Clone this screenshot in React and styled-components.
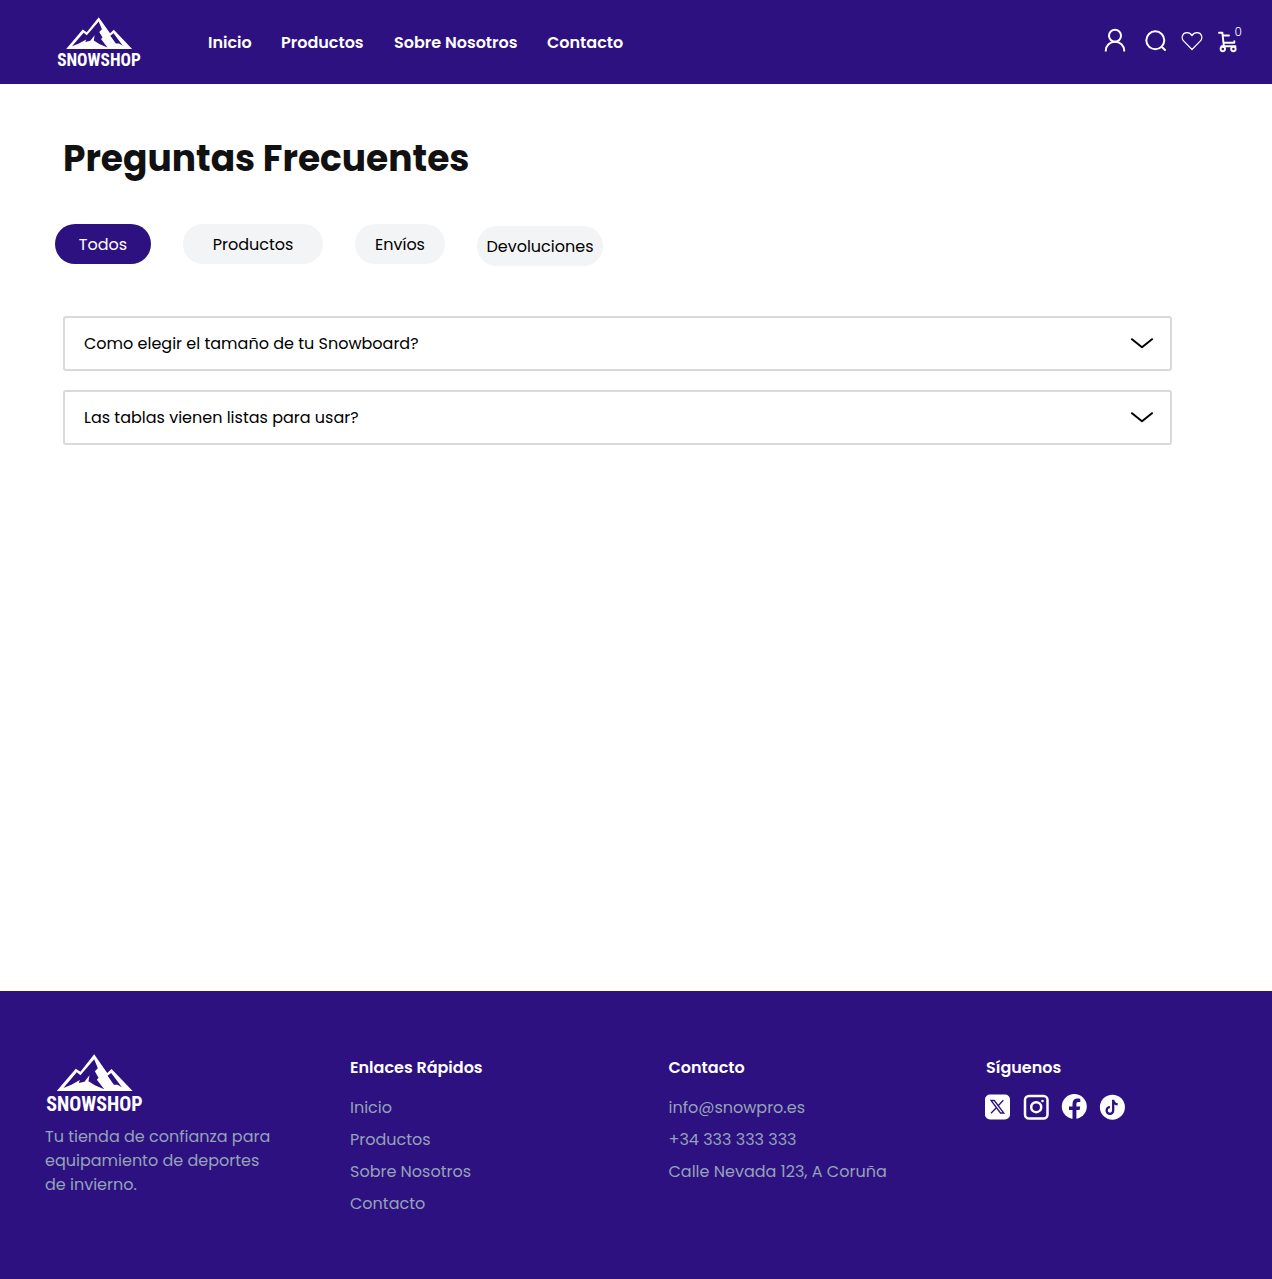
import React, { useState } from "react";
import styled, { createGlobalStyle } from "styled-components";

const GlobalStyle = createGlobalStyle`
  *, *::before, *::after { box-sizing: border-box; }
  body {
    margin: 0;
    background: #fff;
    color: #000;
    font-family: Poppins, Inter, "Open Sans", sans-serif;
    font-size: 16px;
    line-height: 24px;
  }
  h1, h2, p, ul { margin: 0; padding: 0; }
  ul { list-style: none; }
  svg { display: block; flex: none; }
`;

const Page = styled.div`
  min-height: 1279px;
  display: flex;
  flex-direction: column;
`;

const Header = styled.header`
  height: 84px;
  padding-left: 56px;
  display: flex;
  align-items: center;
  background: #2d1180;
  color: #fff;
`;

const Nav = styled.nav`
  display: grid;
  grid-template-columns: 73px 113px 153px auto;
  margin-left: 66px;
  padding-top: 1px;
`;

const NavLink = styled.a`
  font-weight: 600;
  white-space: nowrap;
`;

const Actions = styled.div`
  display: flex;
  align-items: center;
  gap: 12px;
  margin-left: auto;
  padding: 0 29px 2px 0;
`;

const IconButton = styled.button`
  display: flex;
  padding: 0;
  border: 0;
  background: none;
  color: inherit;
  font: inherit;
  margin-right: ${(p) => p.$after || 0}px;
`;

const CartButton = styled(IconButton)`
  position: relative;
`;

const CartCount = styled.span`
  position: absolute;
  top: -2px;
  right: 1px;
  font-size: 12px;
  font-weight: 300;
  line-height: 14px;
`;

const Main = styled.main`
  flex: 1;
  padding: 48px 100px 0 63px;
`;

const Title = styled.h1`
  color: #111;
  font-size: 36px;
  font-weight: 700;
  line-height: 54px;
`;

const Filters = styled.div`
  display: flex;
  align-items: flex-start;
  gap: 32px;
  margin: 38px 0 50px -8px;
`;

const Pill = styled.button`
  width: ${(p) => p.$width}px;
  height: 40px;
  padding: 1px 0 0;
  border: 0;
  border-radius: 20px;
  margin-top: ${(p) => (p.$lowered ? 2 : 0)}px;
  background: ${(p) => (p.$active ? "#2d1180" : "#f3f4f6")};
  color: ${(p) => (p.$active ? "#fff" : "#000")};
  font: inherit;
`;

const QuestionList = styled.div`
  display: flex;
  flex-direction: column;
  gap: 19px;
`;

const Question = styled.button`
  height: 55px;
  padding: 0 16px 0 19px;
  display: flex;
  align-items: center;
  justify-content: space-between;
  border: 2px solid #d9d9d9;
  border-radius: 3px;
  background: #fff;
  color: #000;
  font: inherit;

  & + & svg { margin-top: 1px; }
`;

const Footer = styled.footer`
  height: 288px;
  padding: 62px 45px 0;
  display: grid;
  grid-template-columns: 305px 318.5px 317.5px 1fr;
  align-items: start;
  background: #2d1180;
  color: #94a3b8;
`;

const Tagline = styled.p`
  width: 232px;
  margin-top: 12px;
`;

const ColumnTitle = styled.h2`
  color: #fff;
  font-size: 16px;
  font-weight: 600;
  line-height: 24px;
  margin: 3px 0 16px;
`;

const LinkList = styled.ul`
  display: flex;
  flex-direction: column;
  gap: 8px;
`;

const LinkItem = styled.li`
  white-space: nowrap;
`;

const Social = styled.div`
  display: flex;
  gap: 12px;
  color: #fff;
  margin: -2px 0 0 -1px;
`;

const Logo = ({ width, height }) => (
  <svg width={width} height={height} viewBox="32 24 296 180" preserveAspectRatio="none" overflow="visible" role="img" aria-label="Snowshop">
    <path fill="#fff" d="M67 138 124 71 138 80 179 28 218 84 231 72 294 138Z" />
    <path fill="#2d1180" d="M87 129 127 82 138 91 179 43 190 70 181 79 192 98 187 104 209 133 181 121 162 109 165 91 150 110 133 114 136 105 111 119Z" />
    <path fill="#2d1180" d="M219 92 230 84 262 127 249 119 238 119Z" />
    <text x="36" y="197" fill="#fff" fontFamily='"Roboto Condensed", Roboto, sans-serif' fontSize="63" fontWeight="700" textLength="288" lengthAdjust="spacingAndGlyphs">SNOWSHOP</text>
  </svg>
);

const UserIcon = () => (
  <svg width="24" height="26" viewBox="0 0 24 26" fill="none" stroke="currentColor" strokeWidth="2" strokeLinecap="square">
    <circle cx="12" cy="7.700" r="6" />
    <path d="M2.800 22.500C3 17.500 6.800 13.700 12 13.700S21 17.500 21.200 22.500" />
  </svg>
);

const SearchIcon = () => (
  <svg width="24" height="24" viewBox="0 0 24 24" fill="none" stroke="currentColor" strokeWidth="2" strokeLinecap="round">
    <circle cx="12.300" cy="11.300" r="9" />
    <path d="m18.700 17.700 3.300 3.300" />
  </svg>
);

const HeartIcon = () => (
  <svg width="24" height="24" viewBox="0 0 24 24" fill="none" stroke="currentColor" strokeWidth="1.200" strokeLinejoin="round">
    <path d="M13 20.500 4.800 12.200C1.600 9 3.400 3.700 8 3.700c2.200 0 3.900 1.100 5 3 1.100-1.900 2.800-3 5-3 4.600 0 6.400 5.300 3.200 8.500Z" />
  </svg>
);

const CartIcon = () => (
  <svg width="28" height="28" viewBox="0 0 28 28" fill="none" stroke="currentColor" strokeWidth="1.900" strokeLinecap="round" strokeLinejoin="round">
    <path d="M4 5.800h3.400l1.400 13M8 8.500h6M9 15.800h10.300v-1.500M6.500 19.300h14" />
    <circle cx="7.800" cy="22" r="2.200" />
    <circle cx="18.400" cy="22" r="2.200" />
  </svg>
);

const ChevronIcon = () => (
  <svg width="24" height="12" viewBox="0 0 24 12" fill="none" stroke="#000" strokeWidth="2" strokeLinecap="round" strokeLinejoin="round">
    <path d="m2 1.200 10 8 10-8" />
  </svg>
);

const XIcon = () => (
  <svg width="26" height="26" viewBox="0 0 26 26">
    <rect width="25" height="25" y=".5" rx="5" fill="#fff" />
    <path d="M6 6.500h3.300l9.500 12.500h-3.300ZM18.300 6.200l-5.300 5.800M11.300 13.800 6 19.300" fill="none" stroke="#2d1180" strokeWidth="1.300" />
  </svg>
);

const InstagramIcon = () => (
  <svg width="26" height="26" viewBox="0 0 26 26" fill="none" stroke="#fff">
    <rect x="2" y="2" width="22.500" height="22.500" rx="4" strokeWidth="2.500" />
    <circle cx="13.200" cy="13.200" r="5" strokeWidth="2.500" />
    <circle cx="19.500" cy="7" r="1.300" fill="#fff" stroke="none" />
  </svg>
);

const FacebookIcon = () => (
  <svg width="26" height="26" viewBox="0 0 26 26">
    <circle cx="13.300" cy="12.500" r="12.500" fill="#fff" />
    <path fill="#2d1180" d="M11.500 25v-9H8v-3.600h3.500V9.800c0-3.400 2-5.200 5-5.200 1 0 2 .1 2.800.3v3.200h-1.700c-1.600 0-2.200.9-2.200 2.100v2.200h3.800l-.6 3.600h-3.200v9Z" />
  </svg>
);

const TikTokIcon = () => (
  <svg width="26" height="26" viewBox="0 0 26 26">
    <circle cx="13.400" cy="13.200" r="12.500" fill="#fff" />
    <path d="M14.200 5.700v10.800a3.300 3.300 0 1 1-3.300-3.300M14.200 6.200c.3 2.500 2 4 4.500 4.200" fill="none" stroke="#2d1180" strokeWidth="2.300" />
  </svg>
);

const navigation = ["Inicio", "Productos", "Sobre Nosotros", "Contacto"];

const filters = [
  { label: "Todos", width: 96 },
  { label: "Productos", width: 140 },
  { label: "Envíos", width: 90 },
  { label: "Devoluciones", width: 126, lowered: true },
];

const questions = [
  "Como elegir el tamaño de tu Snowboard?",
  "Las tablas vienen listas para usar?",
];

const columns = [
  { title: "Enlaces Rápidos", items: navigation },
  { title: "Contacto", items: ["info@snowpro.es", "+34 333 333 333", "Calle Nevada 123, A Coruña"] },
];

export default function App() {
  const [active, setActive] = useState("Todos");
  return (
    <>
      <GlobalStyle />
      <Page>
        <Header>
          <Logo width={86} height={52} />
          <Nav>
            {navigation.map((label) => (
              <NavLink key={label}>{label}</NavLink>
            ))}
          </Nav>
          <Actions>
            <IconButton aria-label="Cuenta" $after={4}><UserIcon /></IconButton>
            <IconButton aria-label="Buscar"><SearchIcon /></IconButton>
            <IconButton aria-label="Favoritos"><HeartIcon /></IconButton>
            <CartButton aria-label="Carrito">
              <CartIcon />
              <CartCount>0</CartCount>
            </CartButton>
          </Actions>
        </Header>
        <Main>
          <Title>Preguntas Frecuentes</Title>
          <Filters>
            {filters.map((f) => (
              <Pill
                key={f.label}
                $width={f.width}
                $lowered={f.lowered}
                $active={active === f.label}
                onClick={() => setActive(f.label)}
              >
                {f.label}
              </Pill>
            ))}
          </Filters>
          <QuestionList>
            {questions.map((text) => (
              <Question key={text}>
                {text}
                <ChevronIcon />
              </Question>
            ))}
          </QuestionList>
        </Main>
        <Footer>
          <div>
            <Logo width={99} height={60} />
            <Tagline>Tu tienda de confianza para equipamiento de deportes de invierno.</Tagline>
          </div>
          {columns.map((c) => (
            <div key={c.title}>
              <ColumnTitle>{c.title}</ColumnTitle>
              <LinkList>
                {c.items.map((text) => (
                  <LinkItem key={text}>{text}</LinkItem>
                ))}
              </LinkList>
            </div>
          ))}
          <div>
            <ColumnTitle>Síguenos</ColumnTitle>
            <Social>
              <XIcon />
              <InstagramIcon />
              <FacebookIcon />
              <TikTokIcon />
            </Social>
          </div>
        </Footer>
      </Page>
    </>
  );
}
